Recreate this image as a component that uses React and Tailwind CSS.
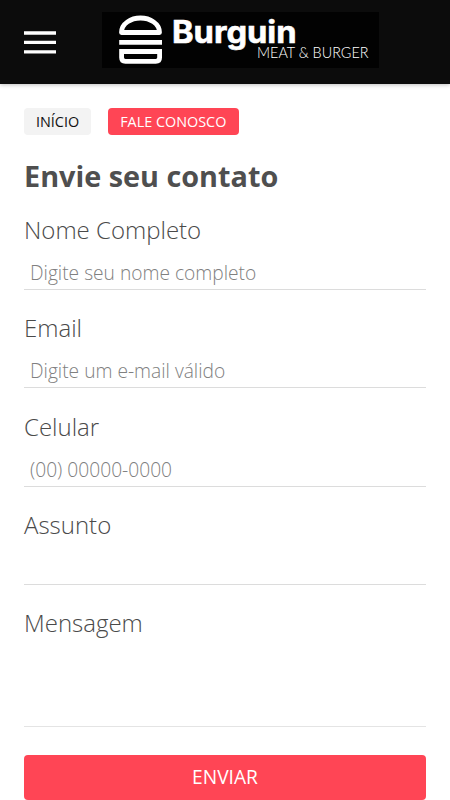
import React, { useState } from "react";

// Fields of the contact form, in display order
const fields = [
  { name: "nome", label: "Nome Completo", type: "text", placeholder: "Digite seu nome completo" },
  { name: "email", label: "Email", type: "email", placeholder: "Digite um e-mail válido" },
  { name: "celular", label: "Celular", type: "tel", placeholder: "(00) 00000-0000" },
  { name: "assunto", label: "Assunto", type: "text", placeholder: "" },
];

const Logo = () => (
  <svg className="block w-[277px] h-14 bg-[#020202]" viewBox="102 12 277 56" role="img" aria-label="Burguin">
    {/* Burger */}
    <g fill="none" stroke="#fff" strokeWidth="4.8">
      <path d="M121.5 32.5C121.5 23.5 131 18 140.5 18S159.500 23.500 159.500 32.500Z" strokeLinejoin="round" />
      <path d="M119.200 42.300H162" />
      <path d="M121.600 51.500H159.600V57.500Q159.600 61.300 155.800 61.300H125.400Q121.600 61.300 121.600 57.500Z" />
    </g>
    <text
      x="172"
      y="43"
      textLength="124.500"
      lengthAdjust="spacingAndGlyphs"
      className="font-['Inter',sans-serif] font-bold text-[31px] fill-white stroke-white stroke-[0.6px]"
    >
      Burguin
    </text>
    <text
      x="257"
      y="58.300"
      textLength="111.500"
      lengthAdjust="spacingAndGlyphs"
      className="font-['Lato',sans-serif] font-light text-[15px] fill-white"
    >
      MEAT &amp; BURGER
    </text>
  </svg>
);

const App = () => {
  // Local state to store form values
  const [form, setForm] = useState({ nome: "", email: "", celular: "", assunto: "", mensagem: "" });

  const handleChange = (e) => {
    setForm({ ...form, [e.target.name]: e.target.value });
  };

  return (
    <div className="h-screen overflow-hidden bg-white font-['Open_Sans',sans-serif]">
      {/* Header */}
      <header className="flex items-start h-[84px] pt-3 pl-6 bg-[#0c0c0c] shadow-[0_1px_4px_rgba(0,0,0,0.25)]">
        <button type="button" aria-label="Menu" className="mt-[19px] mr-[46px]">
          <svg className="block w-8 h-6" viewBox="0 0 32 24" stroke="#fff" strokeWidth="3.3">
            <path d="M0 2H32M0 11.400H32M0 20.900H32" />
          </svg>
        </button>
        <Logo />
      </header>

      <main className="px-6 pt-6">
        {/* Breadcrumb */}
        <nav className="flex gap-[17px] text-[14.4px] leading-[27px]">
          <a href="#" className="px-3 rounded bg-[#f3f3f3] text-[#111]">INÍCIO</a>
          <a href="#" className="pl-3 pr-[12.5px] rounded bg-[#ff4555] text-white">FALE CONOSCO</a>
        </nav>

        <h1 className="mt-[21px] text-[28.8px] leading-[39px] font-bold text-[#4f4f4f]">Envie seu contato</h1>

        {/* Contact form */}
        <form className="mt-[18px]" onSubmit={(e) => e.preventDefault()}>
          {fields.map((field) => (
            <div key={field.name} className="h-[98.3px]">
              <label htmlFor={field.name} className="block text-2xl leading-[33px] font-light text-[#4a4a4a]">
                {field.label}
              </label>
              <input
                id={field.name}
                name={field.name}
                type={field.type}
                value={form[field.name]}
                onChange={handleChange}
                placeholder={field.placeholder}
                className="block w-full h-[44px] pl-[6px] pt-[10px] border-b border-[#dcdcdc] text-[19.2px] font-light placeholder:text-[#808080] focus:outline-none"
              />
            </div>
          ))}

          <label htmlFor="mensagem" className="block text-2xl leading-[33px] font-light text-[#4a4a4a]">
            Mensagem
          </label>
          <textarea
            id="mensagem"
            name="mensagem"
            value={form.mensagem}
            onChange={handleChange}
            className="block w-full h-[88px] px-[6px] border-b border-[#e4e4e4] text-[19.2px] font-light resize-none focus:outline-none"
          />

          <button type="submit" className="block w-full h-[45px] mt-7 rounded bg-[#ff4555] text-white text-[19.2px]">
            ENVIAR
          </button>
        </form>
      </main>
    </div>
  );
};

export default App;
